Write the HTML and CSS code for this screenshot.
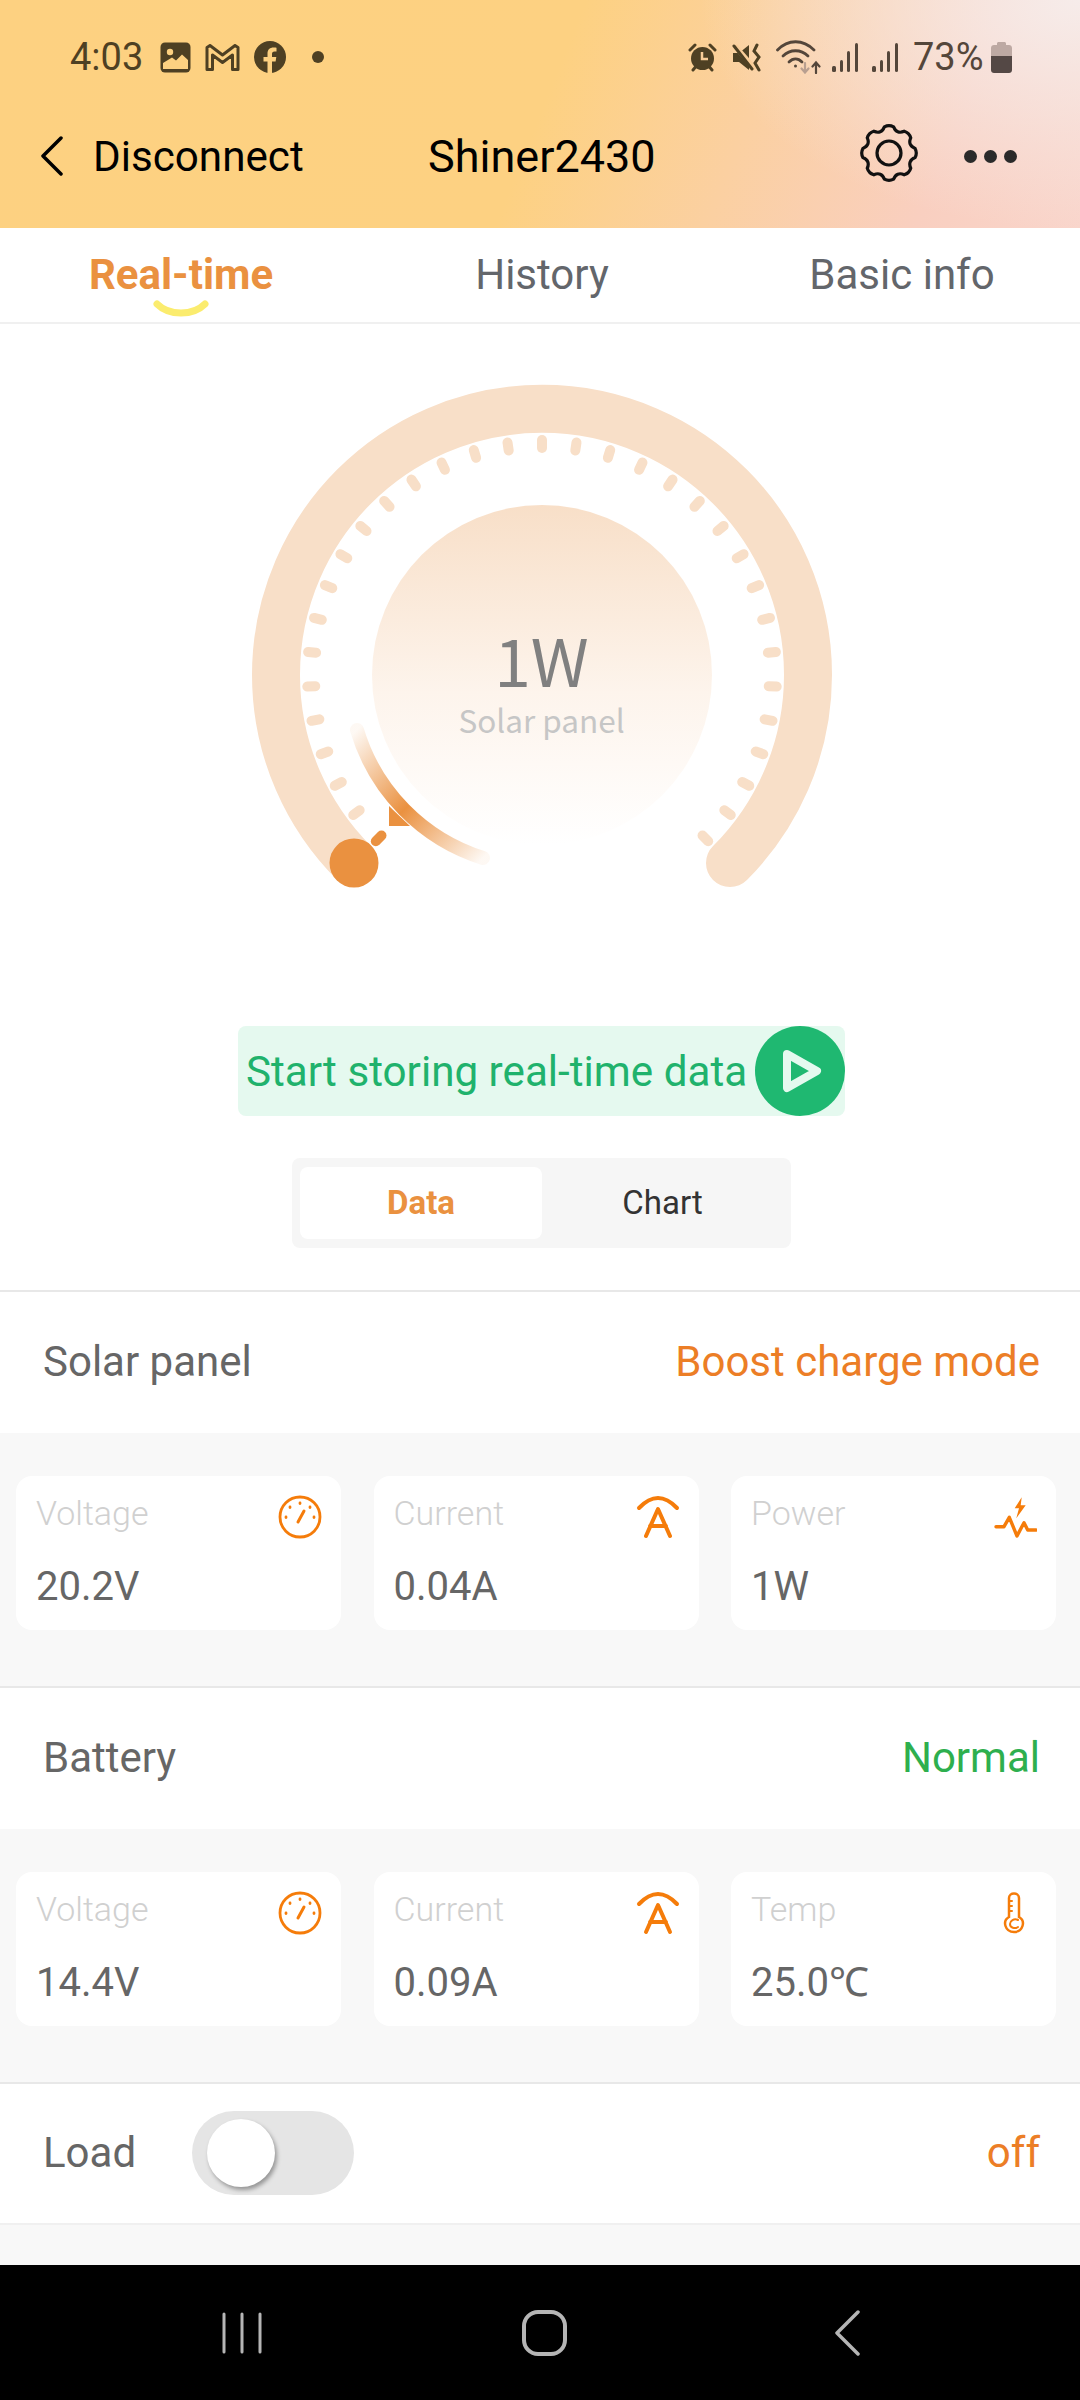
FILE: index.html
```html
<!DOCTYPE html>
<html lang="en">
<head>
    <meta charset="UTF-8">
    <meta name="viewport" content="width=device-width, initial-scale=1.0">
    <title>Shiner2430</title>
    <link rel="stylesheet" href="styles.css">
</head>
<body>
    <header class="top">
        <div class="status">
            <span class="time">4:03</span>
            <svg class="st-image" width="31" height="31" viewBox="0 0 31 31">
                <rect x="0.5" y="0.5" width="30" height="30" rx="4.5" fill="#4e4023"/>
                <circle cx="10" cy="10" r="3.2" fill="#fdd181"/>
                <path d="M3 27V21L12 15.5L16 18.5L22 12.5L28 18V27Z" fill="#fdd181"/>
            </svg>
            <svg class="st-gmail" width="35" height="27" viewBox="0 0 35 27" fill="none" stroke="#4e4023" stroke-width="3" stroke-linejoin="round">
                <path d="M2 25.5V3.5L5 1.5L17.5 11L30 1.5L33 3.5V25.5H27.5V11L17.5 18.5L7.5 11V25.5Z"/>
            </svg>
            <svg class="st-fb" width="32" height="32" viewBox="0 0 32 32">
                <circle cx="16" cy="16" r="16" fill="#4e4023"/>
                <path d="M13.5 32V20.5H9.5V16H13.5V12.5C13.5 8.5 16 6.5 19.5 6.5C21 6.5 22.5 6.7 22.5 6.7V10.5H20.5C18.7 10.5 18 11.5 18 13V16H22.3L21.6 20.5H18V32Z" fill="#fdd181"/>
            </svg>
            <span class="st-dot"></span>
            <span class="status-gap"></span>
            <svg class="st-alarm" width="29" height="29" viewBox="0 0 29 29">
                <circle cx="14.5" cy="15.5" r="11.5" fill="#4e4023"/>
                <path d="M14 9V16H20" fill="none" stroke="#f9cd98" stroke-width="2.5"/>
                <path d="M2 7L7 2M27 7L22 2M5 27L7.5 24M24 27L21.5 24" stroke="#4e4023" stroke-width="3" stroke-linecap="round"/>
            </svg>
            <svg class="st-mute" width="30" height="29" viewBox="0 0 30 29">
                <path d="M1 10H7L17 2V27L7 19H1Z" fill="#4e4023"/>
                <path d="M3 3L23 26" stroke="#f9cd98" stroke-width="5"/>
                <path d="M2 3L20 26" stroke="#4e4023" stroke-width="3" stroke-linecap="round"/>
                <path d="M25 2L22 8L27 14L23 20L27 27" fill="none" stroke="#4e4023" stroke-width="3" stroke-linecap="round"/>
            </svg>
            <svg class="st-wifi" width="46" height="34" viewBox="0 0 46 34" fill="none" stroke="#54463a" stroke-width="2.8" stroke-linecap="round">
                <path d="M1.5 10C12 -1 27 -1 38 10"/>
                <path d="M7 16C14 9 25 9 32 16"/>
                <path d="M13 22C17 18 22 18 26 22"/>
                <circle cx="19.5" cy="26" r="1.5" fill="#54463a" stroke="none"/>
                <path d="M29 23V32M25.5 28.5L29 32.5L32.5 28.5" stroke="#b89f90" stroke-width="2.2"/>
                <path d="M40 33V23M36.5 26.5L40 22.5L43.5 26.5" stroke-width="2.2"/>
            </svg>
            <svg class="st-signal" width="27" height="29" viewBox="0 0 27 29" fill="#54463a">
                <rect x="0" y="23" width="4" height="6" rx="1.5"/>
                <rect x="8" y="17" width="3" height="12" rx="1.5"/>
                <rect x="15" y="8" width="3" height="21" rx="1.5"/>
                <rect x="23" y="0" width="3" height="29" rx="1.5"/>
            </svg>
            <svg class="st-signal2" width="27" height="29" viewBox="0 0 27 29" fill="#54463a">
                <rect x="0" y="23" width="4" height="6" rx="1.5"/>
                <rect x="8" y="17" width="3" height="12" rx="1.5"/>
                <rect x="15" y="8" width="3" height="21" rx="1.5"/>
                <rect x="23" y="0" width="3" height="29" rx="1.5"/>
            </svg>
            <span class="percent">73%</span>
            <svg class="st-battery" width="21" height="31" viewBox="0 0 21 31">
                <path d="M6 3V1.5C6 .7 6.7 0 7.5 0H13.5C14.3 0 15 .7 15 1.5V3H18C19.7 3 21 4.3 21 6V14H0V6C0 4.3 1.3 3 3 3Z" fill="#bda9a3"/>
                <path d="M0 14H21V28C21 29.7 19.7 31 18 31H3C1.3 31 0 29.7 0 28Z" fill="#544845"/>
            </svg>
        </div>
        <div class="nav-row">
            <svg class="back" width="24" height="40" viewBox="0 0 24 40" fill="none" stroke="#000" stroke-width="3.5" stroke-linecap="round" stroke-linejoin="round">
                <path d="M21 2L3 20L21 38"/>
            </svg>
            <span class="disconnect">Disconnect</span>
            <span class="device">Shiner2430</span>
            <svg class="gear" width="60" height="60" viewBox="-2 -2 60 60" fill="none" stroke="#111" stroke-width="3.2">
                <path d="M54.1 23.4Q56.5 28 54.1 32.6Q46.5 35.7 49.7 43.2Q48.2 48.2 43.2 49.7Q35.7 46.5 32.6 54.1Q28 56.5 23.4 54.1Q20.3 46.5 12.8 49.7Q7.8 48.2 6.3 43.2Q9.5 35.7 1.9 32.6Q-.5 28 1.9 23.4Q9.5 20.3 6.3 12.8Q7.8 7.8 12.8 6.3Q20.3 9.5 23.4 1.9Q28 -.5 32.6 1.9Q35.7 9.5 43.2 6.3Q48.2 7.8 49.7 12.8Q46.5 20.3 54.1 23.4Z"/>
                <circle cx="28" cy="28" r="12"/>
            </svg>
            <div class="more"><i></i><i></i><i></i></div>
        </div>
    </header>

    <nav class="tabs">
        <div class="tab active">Real-time
            <svg class="smile" width="56" height="18" viewBox="0 0 56 18">
                <path d="M4 4C16 16 40 16 52 4" fill="none" stroke="#fbec6e" stroke-width="7" stroke-linecap="round"/>
            </svg>
        </div>
        <div class="tab">History</div>
        <div class="tab">Basic info</div>
    </nav>

    <main class="realtime">
        <div class="gauge-wrap">
            <svg class="gauge" width="580" height="642" viewBox="-290 -291 580 642">
                <defs>
                    <linearGradient id="faceFill" x1="0" y1="0" x2="0" y2="1">
                        <stop offset="0" stop-color="#f8dfc8"/>
                        <stop offset="0.55" stop-color="#fdf4ec"/>
                        <stop offset="1" stop-color="#fff"/>
                    </linearGradient>
                    <linearGradient id="sweepFill" gradientUnits="userSpaceOnUse" x1="-185" y1="55" x2="-59" y2="183">
                        <stop offset="0" stop-color="#ea9140" stop-opacity="0.06"/>
                        <stop offset="0.5" stop-color="#ea9140"/>
                        <stop offset="1" stop-color="#ea9140" stop-opacity="0.06"/>
                    </linearGradient>
                    <line id="tick" x1="0" y1="-227" x2="0" y2="-235" stroke-width="10" stroke-linecap="round"/>
                </defs>
                <path d="M-188 188A266 266 0 1 1 188 188" fill="none" stroke="#f8dfc8" stroke-width="48" stroke-linecap="round"/>
                <circle cx="0" cy="0" r="170" fill="url(#faceFill)"/>
                <g stroke="#f8dfc8">
                    <use href="#tick" transform="rotate(-126.5625)"/>
                    <use href="#tick" transform="rotate(-118.125)"/>
                    <use href="#tick" transform="rotate(-109.6875)"/>
                    <use href="#tick" transform="rotate(-101.25)"/>
                    <use href="#tick" transform="rotate(-92.8125)"/>
                    <use href="#tick" transform="rotate(-84.375)"/>
                    <use href="#tick" transform="rotate(-75.9375)"/>
                    <use href="#tick" transform="rotate(-67.5)"/>
                    <use href="#tick" transform="rotate(-59.0625)"/>
                    <use href="#tick" transform="rotate(-50.625)"/>
                    <use href="#tick" transform="rotate(-42.1875)"/>
                    <use href="#tick" transform="rotate(-33.75)"/>
                    <use href="#tick" transform="rotate(-25.3125)"/>
                    <use href="#tick" transform="rotate(-16.875)"/>
                    <use href="#tick" transform="rotate(-8.4375)"/>
                    <use href="#tick"/>
                    <use href="#tick" transform="rotate(8.4375)"/>
                    <use href="#tick" transform="rotate(16.875)"/>
                    <use href="#tick" transform="rotate(25.3125)"/>
                    <use href="#tick" transform="rotate(33.75)"/>
                    <use href="#tick" transform="rotate(42.1875)"/>
                    <use href="#tick" transform="rotate(50.625)"/>
                    <use href="#tick" transform="rotate(59.0625)"/>
                    <use href="#tick" transform="rotate(67.5)"/>
                    <use href="#tick" transform="rotate(75.9375)"/>
                    <use href="#tick" transform="rotate(84.375)"/>
                    <use href="#tick" transform="rotate(92.8125)"/>
                    <use href="#tick" transform="rotate(101.25)"/>
                    <use href="#tick" transform="rotate(109.6875)"/>
                    <use href="#tick" transform="rotate(118.125)"/>
                    <use href="#tick" transform="rotate(126.5625)"/>
                    <use href="#tick" transform="rotate(135)"/>
                </g>
                <use href="#tick" stroke="#ea9140" transform="rotate(-135)"/>
                <path d="M-153 131V151H-132Z" fill="#ea9140"/>
                <path d="M-185 55A192 192 0 0 0 -59 183" fill="none" stroke="url(#sweepFill)" stroke-width="14" stroke-linecap="round"/>
                <circle cx="-188" cy="188" r="24.5" fill="#ea9140"/>
            </svg>
            <div class="gauge-text">
                <div class="gauge-value">1W</div>
                <div class="gauge-label">Solar panel</div>
            </div>
        </div>

        <div class="store-btn">
            <span>Start storing real-time data</span>
            <div class="play">
                <svg width="44" height="48" viewBox="0 0 44 48">
                    <path d="M7 7L37 24L7 41Z" fill="none" stroke="#e5f9ef" stroke-width="8" stroke-linejoin="round"/>
                </svg>
            </div>
        </div>

        <div class="segment">
            <div class="seg-item seg-on">Data</div>
            <div class="seg-item">Chart</div>
        </div>
    </main>

    <section class="block">
        <div class="row">
            <span class="row-title">Solar panel</span>
            <span class="row-state orange">Boost charge mode</span>
        </div>
        <div class="cards">
            <div class="card">
                <div class="card-top">
                    <span class="card-label">Voltage</span>
                    <svg class="card-icon" width="44" height="44" viewBox="0 0 44 44" fill="none" stroke="#f57c0a" stroke-width="2.8" stroke-linecap="round">
                        <circle cx="22" cy="22" r="20"/>
                        <path d="M20 27L26 16" stroke-width="3"/>
                        <path d="M22 8V8.5M12 12V12.5M32 12V12.5M8 22V22.5M36 22V22.5"/>
                    </svg>
                </div>
                <div class="card-value">20.2V</div>
            </div>
            <div class="card">
                <div class="card-top">
                    <span class="card-label">Current</span>
                    <svg class="card-icon" width="44" height="44" viewBox="0 0 44 44" fill="none" stroke="#f57c0a" stroke-width="4" stroke-linecap="round" stroke-linejoin="round">
                        <path d="M3 13Q22 -7 41 13"/>
                        <path d="M10 41L22 14L34 41M14 31H30"/>
                    </svg>
                </div>
                <div class="card-value">0.04A</div>
            </div>
            <div class="card">
                <div class="card-top">
                    <span class="card-label">Power</span>
                    <svg class="card-icon" width="44" height="44" viewBox="0 0 44 44" fill="none" stroke="#f57c0a" stroke-width="3.4" stroke-linecap="round" stroke-linejoin="round">
                        <path d="M28.7 2.3L21.7 13.3H26L23.3 23.3L32.7 10.3H27.7Z" fill="#f57c0a" stroke="none"/>
                        <path d="M3 31.7H11L16.3 22.3L24 41L31 27.7L34.7 35H43"/>
                    </svg>
                </div>
                <div class="card-value">1W</div>
            </div>
        </div>
    </section>

    <section class="block">
        <div class="row">
            <span class="row-title">Battery</span>
            <span class="row-state green">Normal</span>
        </div>
        <div class="cards">
            <div class="card">
                <div class="card-top">
                    <span class="card-label">Voltage</span>
                    <svg class="card-icon" width="44" height="44" viewBox="0 0 44 44" fill="none" stroke="#f57c0a" stroke-width="2.8" stroke-linecap="round">
                        <circle cx="22" cy="22" r="20"/>
                        <path d="M20 27L26 16" stroke-width="3"/>
                        <path d="M22 8V8.5M12 12V12.5M32 12V12.5M8 22V22.5M36 22V22.5"/>
                    </svg>
                </div>
                <div class="card-value">14.4V</div>
            </div>
            <div class="card">
                <div class="card-top">
                    <span class="card-label">Current</span>
                    <svg class="card-icon" width="44" height="44" viewBox="0 0 44 44" fill="none" stroke="#f57c0a" stroke-width="4" stroke-linecap="round" stroke-linejoin="round">
                        <path d="M3 13Q22 -7 41 13"/>
                        <path d="M10 41L22 14L34 41M14 31H30"/>
                    </svg>
                </div>
                <div class="card-value">0.09A</div>
            </div>
            <div class="card">
                <div class="card-top">
                    <span class="card-label">Temp</span>
                    <svg class="card-icon" width="44" height="44" viewBox="0 0 44 44" fill="none" stroke="#f57c0a" stroke-width="2.5" stroke-linecap="round">
                        <path d="M16 26V7C16 1 26 1 26 7V26C33 30 30 41 21 41C12 41 9 30 16 26Z"/>
                        <path d="M16 10H19M16 15H19M16 20H19" stroke-width="2"/>
                        <path d="M25 29C21 27 17 30 17 33C17 37 22 38 25 36" stroke-width="2"/>
                    </svg>
                </div>
                <div class="card-value">25.0℃</div>
            </div>
        </div>
    </section>

    <div class="load-row">
        <span class="row-title">Load</span>
        <div class="toggle"><div class="knob"></div></div>
        <span class="row-state orange">off</span>
    </div>
    <div class="filler"></div>

    <footer class="sysnav">
        <div class="sys-item">
            <svg width="40" height="42" viewBox="0 0 40 42" stroke="#b5b5b5" stroke-width="3" stroke-linecap="round">
                <path d="M2 2V40M20 2V40M38 2V40"/>
            </svg>
        </div>
        <div class="sys-item">
            <svg width="45" height="46" viewBox="0 0 45 46" fill="none" stroke="#b5b5b5" stroke-width="4">
                <rect x="2" y="2" width="41" height="42" rx="14"/>
            </svg>
        </div>
        <div class="sys-item">
            <svg width="26" height="46" viewBox="0 0 26 46" fill="none" stroke="#b5b5b5" stroke-width="3.5" stroke-linecap="round" stroke-linejoin="round">
                <path d="M24 2L3 23L24 44"/>
            </svg>
        </div>
    </footer>
</body>
</html>
```

FILE: styles.css
```css
* {
    box-sizing: border-box;
}

body {
    margin: 0;
    width: 1080px;
    height: 2400px;
    overflow: hidden;
    background: #fff;
    font-family: Roboto, sans-serif;
    color: #666;
}

/* header */
.top {
    height: 228px;
    background:
        radial-gradient(ellipse 380px 230px at 100% 0, #f6ecea 0, rgba(246, 236, 234, 0) 100%),
        linear-gradient(112deg, #fdd181 0, #fdd182 50%, #f9cfc0 86%, #f9d5cb 100%);
}

.status {
    display: flex;
    align-items: center;
    height: 114px;
    padding-left: 70px;
    color: #4e4023;
}

.time {
    width: 90px;
    font-size: 38px;
}

.st-gmail {
    margin-left: 14px;
}

.st-fb {
    margin-left: 14px;
}

.st-dot {
    width: 12px;
    height: 12px;
    margin-left: 26px;
    border-radius: 50%;
    background: #4e4023;
}

.status-gap {
    flex: 1;
}

.st-alarm {
    margin-right: -1px;
}

.st-mute {
    margin-left: 16px;
}

.st-wifi {
    margin-left: 14px;
}

.st-signal {
    margin-left: 10px;
}

.st-signal2 {
    margin-left: 13px;
}

.percent {
    width: 76px;
    margin-left: 14px;
    font-size: 38px;
    color: #54463a;
}

.st-battery {
    margin-left: 2px;
    margin-right: 68px;
}

.nav-row {
    display: flex;
    align-items: center;
    height: 84px;
    padding-left: 40px;
    color: #000;
    font-size: 42.2px;
}

.disconnect {
    width: 335px;
    margin-left: 29px;
}

.device {
    width: 431px;
    font-size: 45px;
}

.gear {
    margin-top: -6px;
}

.more {
    display: flex;
    gap: 7px;
    margin-left: 45px;
}

.more i {
    width: 13px;
    height: 13px;
    border-radius: 50%;
    background: #2a2a2a;
}

/* tabs */
.tabs {
    display: grid;
    grid-template-columns: 362px 360px 358px;
    height: 96px;
    border-bottom: 2px solid #f0f0f0;
}

.tab {
    position: relative;
    padding-top: 22px;
    text-align: center;
    font-size: 42px;
    color: #63666b;
}

.tab:last-child {
    padding-left: 2px;
}

.tab.active {
    font-weight: 700;
    color: #ea9140;
}

.smile {
    position: absolute;
    left: 153px;
    top: 72px;
}

/* gauge */
.realtime {
    display: flex;
    flex-direction: column;
    align-items: center;
    height: 968px;
    padding: 60px 0 0 3px;
    border-bottom: 2px solid #e8e8e8;
}

.gauge-wrap {
    position: relative;
    flex: none;
    width: 580px;
    height: 642px;
}

.gauge {
    display: block;
}

.gauge-text {
    position: absolute;
    top: 241px;
    left: 0;
    right: 0;
    text-align: center;
    font-family: "Noto Sans CJK SC", "Noto Sans", sans-serif;
}

.gauge-value {
    font-size: 66px;
    line-height: 66px;
    color: #808080;
}

.gauge-label {
    margin-top: 10px;
    font-size: 31.5px;
    line-height: 36px;
    color: #c6c6c6;
}

.store-btn {
    display: flex;
    align-items: center;
    justify-content: space-between;
    width: 607px;
    height: 90px;
    padding-left: 8px;
    border-radius: 8px;
    background: #e5f9ef;
    color: #20b26c;
    font-size: 42.2px;
}

.play {
    display: flex;
    align-items: center;
    justify-content: center;
    width: 90px;
    height: 90px;
    padding-left: 3px;
    border-radius: 50%;
    background: #1fb871;
}

.segment {
    display: flex;
    width: 499px;
    height: 90px;
    margin-top: 42px;
    padding: 9px 8px;
    border-radius: 8px;
    background: #f6f6f6;
    font-size: 33px;
    color: #333;
}

.seg-item {
    display: flex;
    align-items: center;
    justify-content: center;
    flex: 1;
    padding-bottom: 2px;
}

.seg-on {
    flex: none;
    width: 242px;
    border-radius: 8px;
    background: #fff;
    color: #ea9140;
    font-weight: 700;
}

/* sections */
.block {
    height: 396px;
    border-bottom: 2px solid #e8e8e8;
    background: #f8f8f8;
}

.row {
    display: flex;
    align-items: center;
    justify-content: space-between;
    height: 141px;
    padding: 0 40px 2px 43px;
    background: #fff;
}

.row-title {
    font-size: 42px;
    color: #666;
}

.row-state {
    font-size: 42px;
}

.orange {
    color: #ec7e26;
}

.green {
    color: #2eaf4e;
}

.cards {
    display: grid;
    grid-template-columns: 325px 325px 325px;
    column-gap: 32.5px;
    padding: 43px 0 0 16px;
}

.card {
    height: 154px;
    padding: 19px 19px 0 20px;
    border-radius: 16px;
    background: #fff;
}

.card-top {
    display: flex;
    justify-content: space-between;
}

.card-label {
    margin-top: -2px;
    font-size: 34px;
    font-weight: 300;
    line-height: 40px;
    color: #d0d0d0;
}

.card-value {
    margin-top: 24px;
    font-size: 40px;
    line-height: 48px;
    color: #666;
}

.load-row {
    display: flex;
    align-items: center;
    height: 141px;
    padding: 0 40px 2px 43px;
    border-bottom: 2px solid #f0f0f0;
}

.toggle {
    width: 162px;
    height: 84px;
    margin-left: 56px;
    padding: 8px 15px;
    border-radius: 42px;
    background: #e5e5e5;
}

.knob {
    width: 68px;
    height: 68px;
    border-radius: 50%;
    background: #fff;
    box-shadow: 2px 3px 4px rgba(0, 0, 0, 0.35);
}

.load-row .row-state {
    margin-left: auto;
}

.filler {
    height: 40px;
    background: #f8f8f8;
}

.sysnav {
    display: grid;
    grid-template-columns: repeat(3, 302.5px);
    height: 135px;
    padding-left: 91px;
    background: #000;
}

.sys-item {
    display: flex;
    align-items: center;
    justify-content: center;
}
```
